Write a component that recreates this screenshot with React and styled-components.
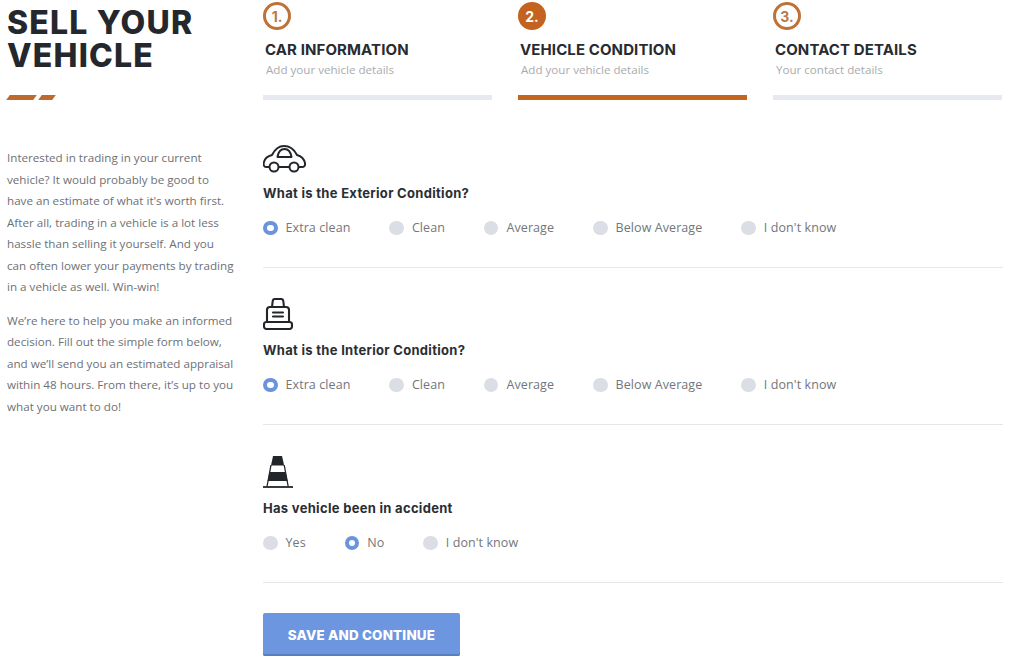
import React from "react";
import styled, { createGlobalStyle } from "styled-components";

const Global = createGlobalStyle`
  html, body { margin: 0; padding: 0; background: #fff; }
  body { font-family: "Open Sans", "Liberation Sans", sans-serif; color: #22262b; }
  * { box-sizing: border-box; }
`;

const heading = `"Inter", "Liberation Sans", sans-serif`;

const Page = styled.div`
  display: grid;
  grid-template-columns: 228px 1fr;
  column-gap: 28px;
  width: 1024px;
  height: 659px;
  padding: 0 22px 0 7px;
  overflow: hidden;
`;

const Sidebar = styled.aside`
  display: flex;
  flex-direction: column;
`;

const Title = styled.h1`
  margin: 6px 0 0;
  font-family: ${heading};
  font-size: 32px;
  line-height: 33px;
  font-weight: 800;
  letter-spacing: 1.2px;
  color: #24282d;
`;

const Dashes = styled.div`
  display: flex;
  gap: 5px;
  margin: 23px 0 0 0.75px;
`;

const Dash = styled.span`
  display: block;
  width: ${(p) => p.$w}px;
  height: 5px;
  background: #bd6a2c;
  transform: skewX(-35deg);
`;

const Para = styled.p`
  margin: 0 0 12px;
  font-size: 11.65px;
  line-height: 21.5px;
  white-space: nowrap;
  color: #6d7075;
  &:first-of-type { margin-top: 47px; }
`;

const Main = styled.main`
  display: flex;
  flex-direction: column;
`;

const Steps = styled.div`
  display: grid;
  grid-template-columns: repeat(3, 228.5px);
  column-gap: 26.5px;
  padding-top: 2px;
`;

const Step = styled.div`
  display: flex;
  flex-direction: column;
`;

const Circle = styled.div`
  display: flex;
  align-items: center;
  justify-content: center;
  width: 28px;
  height: 28px;
  border-radius: 50%;
  border: 3px solid ${(p) => (p.$active ? "#c4621f" : "#bf7238")};
  background: ${(p) => (p.$active ? "#c4621f" : "#fff")};
  color: ${(p) => (p.$active ? "#fff" : "#b9794a")};
  font-family: ${heading};
  font-size: 14px;
  font-weight: 700;
`;

const StepTitle = styled.div`
  margin: 11px 0 0 2px;
  font-family: ${heading};
  font-size: 15px;
  line-height: 18px;
  font-weight: 700;
  color: #282c31;
  letter-spacing: 0.1px;
`;

const StepSub = styled.div`
  margin: 3px 0 0 3px;
  font-size: 11.6px;
  line-height: 16px;
  color: #a9abae;
`;

const Bar = styled.div`
  height: 5px;
  margin-top: 17px;
  background: ${(p) => (p.$active ? "#c4651f" : "#e6eaf0")};
`;

const Section = styled.section`
  display: flex;
  flex-direction: column;
  align-items: flex-start;
  height: ${(p) => p.$h}px;
  padding-top: ${(p) => p.$top}px;
  border-bottom: 1px solid #e6e7e9;
  width: 740px;
`;

const IconBox = styled.div`
  display: flex;
  align-items: flex-end;
  height: 32px;
  color: #22262b;
`;

const Question = styled.h3`
  margin: 12px 0 0;
  font-family: ${heading};
  font-size: 13px;
  line-height: 16px;
  font-weight: 700;
  color: #2a2e33;
  letter-spacing: 0.3px;
`;

const Options = styled.div`
  display: flex;
  gap: 39px;
  margin-top: 18px;
`;

const Option = styled.label`
  display: flex;
  align-items: center;
  gap: 8px;
  font-size: 12.5px;
  line-height: 18px;
  letter-spacing: 0.08px;
  color: #73767b;
`;

const Radio = styled.span`
  display: block;
  width: 14.5px;
  height: 14.5px;
  border-radius: 50%;
  background: ${(p) => (p.$on ? "#fff" : "#dcdee6")};
  border: ${(p) => (p.$on ? "4.5px solid #6a94dc" : "none")};
`;

const Footer = styled.div`
  padding-top: 30px;
`;

const Button = styled.button`
  display: block;
  width: 197px;
  height: 43px;
  border: none;
  border-radius: 2px;
  background: #6c97e0;
  box-shadow: inset 0 -2px 0 #5a7fbe;
  color: #fff;
  font-family: ${heading};
  font-size: 13.4px;
  font-weight: 800;
  letter-spacing: 0.2px;
`;

const CarIcon = () => (
  <svg width="44" height="28" viewBox="0 0 44 28" fill="none" stroke="currentColor" strokeWidth="2" strokeLinecap="round" strokeLinejoin="round">
    <path d="M6 22H3C1 22 0 20 1 17 2 13 5 11 9 10 12 4 16 1 21 1c6 0 10 3 13 9 4 1 7 4 8 8 .5 3-1 4-3 4h-3" />
    <path d="M16 22h10" />
    <circle cx="11" cy="22" r="4.500" />
    <circle cx="31" cy="22" r="4.500" />
    <path d="M14.500 12c.8-5 3.500-8 7-8s6.200 3 7 8z" />
  </svg>
);

const SeatIcon = () => (
  <svg width="30" height="32" viewBox="0 0 30 32" fill="none" stroke="currentColor" strokeWidth="2.100" strokeLinecap="round" strokeLinejoin="round">
    <path d="M9 9l.7-6C9.900 1.800 10.800 1 12 1h6c1.200 0 2.100.8 2.300 2l.7 6" />
    <path d="M4 24V12c0-1.800 1.200-3 3-3h16c1.800 0 3 1.200 3 3v12" />
    <path d="M10 14.500h10M10 18.500h10" />
    <rect x="1" y="24" width="28" height="7" rx="2.500" />
  </svg>
);

const ConeIcon = () => (
  <svg width="31" height="32" viewBox="0 0 31 32" fill="none">
    <path d="M10 0h9l2.200 9.500H8z" fill="currentColor" />
    <path d="M6.600 16h16l2 9H4.700z" fill="currentColor" />
    <path d="M8 9L4 30.500M21.200 9l4 21.500" stroke="currentColor" strokeWidth="1.300" />
    <path d="M0 31h30" stroke="currentColor" strokeWidth="1.800" />
  </svg>
);

const steps = [
  { n: "1.", title: "CAR INFORMATION", sub: "Add your vehicle details" },
  { n: "2.", title: "VEHICLE CONDITION", sub: "Add your vehicle details", active: true },
  { n: "3.", title: "CONTACT DETAILS", sub: "Your contact details" },
];

const condition = ["Extra clean", "Clean", "Average", "Below Average", "I don't know"];

const sections = [
  { Icon: CarIcon, q: "What is the Exterior Condition?", opts: condition, sel: 0, top: 41, h: 168 },
  { Icon: SeatIcon, q: "What is the Interior Condition?", opts: condition, sel: 0, top: 30, h: 157 },
  { Icon: ConeIcon, q: "Has vehicle been in accident", opts: ["Yes", "No", "I don't know"], sel: 1, top: 31, h: 158 },
];

export default function App() {
  return (
    <Page>
      <Global />
      <Sidebar>
        <Title>SELL YOUR<br />VEHICLE</Title>
        <Dashes>
          <Dash $w={27} />
          <Dash $w={13.5} />
        </Dashes>
        <Para>
          Interested in trading in your current<br />
          vehicle? It would probably be good to<br />
          have an estimate of what it's worth first.<br />
          After all, trading in a vehicle is a lot less<br />
          hassle than selling it yourself. And you<br />
          can often lower your payments by trading<br />
          in a vehicle as well. Win-win!
        </Para>
        <Para>
          We’re here to help you make an informed<br />
          decision. Fill out the simple form below,<br />
          and we’ll send you an estimated appraisal<br />
          within 48 hours. From there, it’s up to you<br />
          what you want to do!
        </Para>
      </Sidebar>
      <Main>
        <Steps>
          {steps.map((s) => (
            <Step key={s.n}>
              <Circle $active={s.active}>{s.n}</Circle>
              <StepTitle>{s.title}</StepTitle>
              <StepSub>{s.sub}</StepSub>
              <Bar $active={s.active} />
            </Step>
          ))}
        </Steps>
        {sections.map(({ Icon, q, opts, sel, top, h }) => (
          <Section key={q} $top={top} $h={h}>
            <IconBox><Icon /></IconBox>
            <Question>{q}</Question>
            <Options>
              {opts.map((o, i) => (
                <Option key={o}>
                  <Radio $on={i === sel} />
                  {o}
                </Option>
              ))}
            </Options>
          </Section>
        ))}
        <Footer>
          <Button>SAVE AND CONTINUE</Button>
        </Footer>
      </Main>
    </Page>
  );
}
